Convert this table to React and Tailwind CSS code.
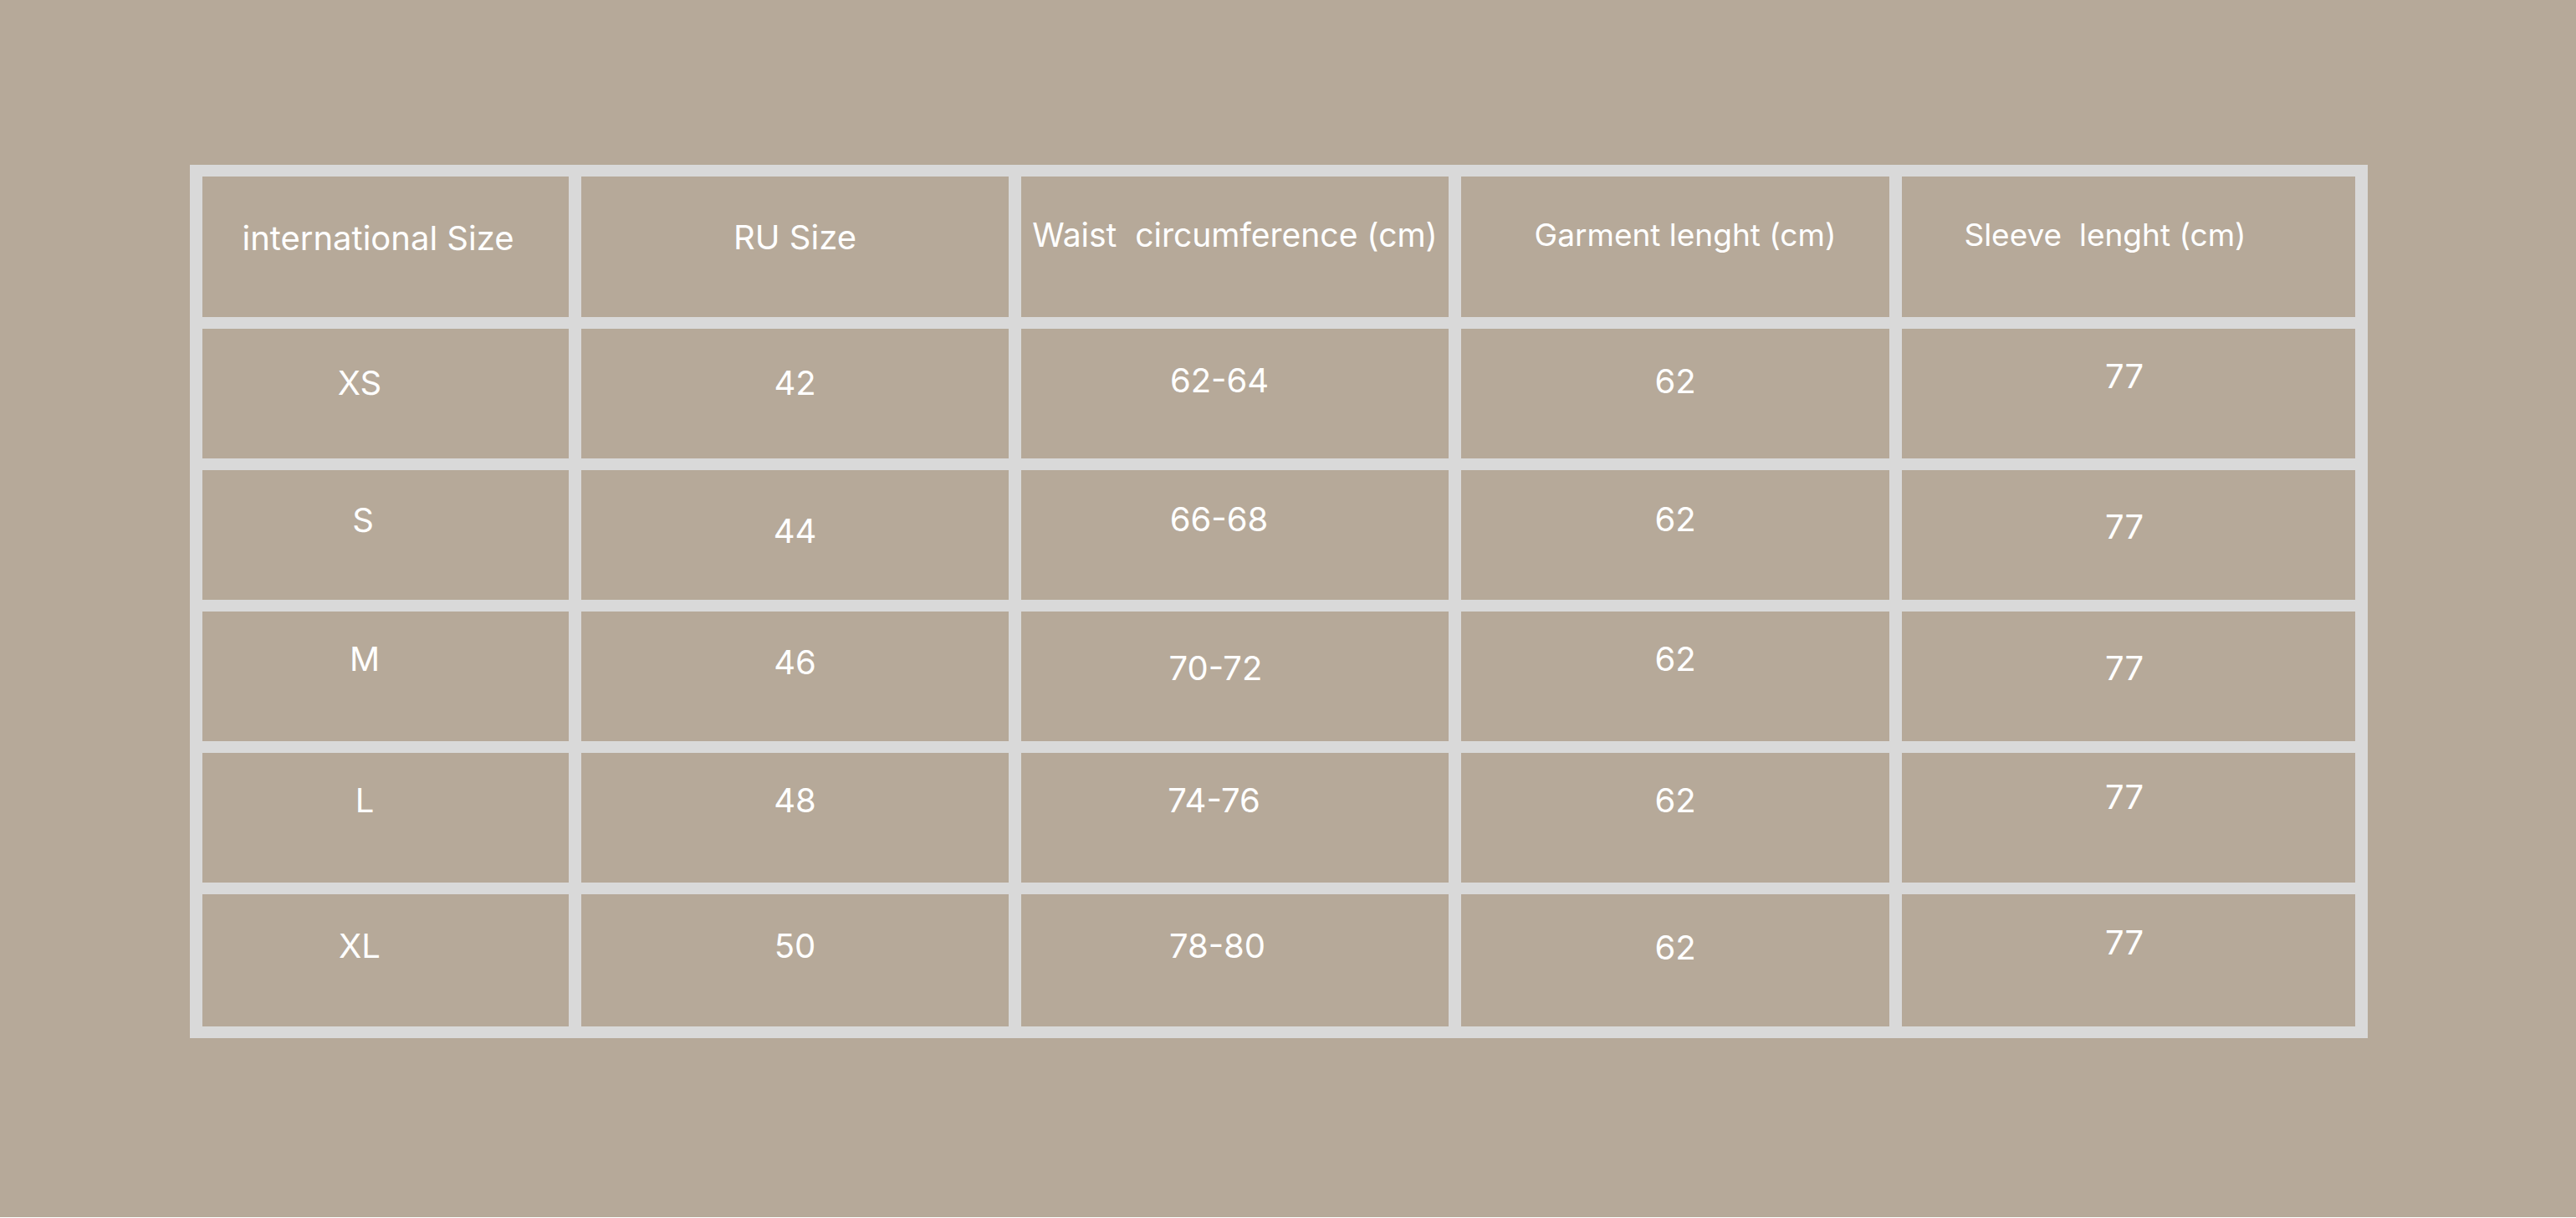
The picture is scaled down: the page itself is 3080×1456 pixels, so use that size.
import React from "react";

const header = [
  { text: "international Size", cls: "pt-[54px] pr-[18px]", size: "text-[40px]" },
  { text: "RU Size", cls: "pt-[53px]", size: "text-[40px]" },
  { text: "Waist  circumference (cm)", cls: "pt-[50px]", size: "text-[39px]" },
  { text: "Garment lenght (cm)", cls: "pt-[51px] pl-[24px]", size: "text-[37px]" },
  { text: "Sleeve  lenght (cm)", cls: "pt-[51px] pr-[56px]", size: "text-[37px]" },
];

// each cell keeps its own nudge, the source layout was placed by hand
const rows = [
  [
    { text: "XS", cls: "pt-[45px] pr-[62px]" },
    { text: "42", cls: "pt-[45px]" },
    { text: "62-64", cls: "pt-[42px] pr-[37px]" },
    { text: "62", cls: "pt-[43px]" },
    { text: "77", cls: "pt-[37px] pr-[10px]" },
  ],
  [
    { text: "S", cls: "pt-[40px] pr-[54px]" },
    { text: "44", cls: "pt-[53px]" },
    { text: "66-68", cls: "pt-[39px] pr-[38px]" },
    { text: "62", cls: "pt-[39px]" },
    { text: "77", cls: "pt-[48px] pr-[10px]" },
  ],
  [
    { text: "M", cls: "pt-[37px] pr-[50px]" },
    { text: "46", cls: "pt-[41px]" },
    { text: "70-72", cls: "pt-[48px] pr-[46px]" },
    { text: "62", cls: "pt-[37px]" },
    { text: "77", cls: "pt-[48px] pr-[10px]" },
  ],
  [
    { text: "L", cls: "pt-[37px] pr-[50px]" },
    { text: "48", cls: "pt-[37px]" },
    { text: "74-76", cls: "pt-[37px] pr-[50px]" },
    { text: "62", cls: "pt-[37px]" },
    { text: "77", cls: "pt-[33px] pr-[10px]" },
  ],
  [
    { text: "XL", cls: "pt-[42px] pr-[62px]" },
    { text: "50", cls: "pt-[42px]" },
    { text: "78-80", cls: "pt-[42px] pr-[42px]" },
    { text: "62", cls: "pt-[44px]" },
    { text: "77", cls: "pt-[38px] pr-[10px]" },
  ],
];

const Cell = ({ text, cls, size = "text-[40px]" }) => (
  <div className={`flex justify-center bg-[#b6a999] ${cls}`}>
    <span className={`whitespace-pre leading-none font-normal text-white ${size}`}>
      {text}
    </span>
  </div>
);

export default function App() {
  return (
    <div
      className="h-[1455px] w-full bg-[#b6a999] pt-[197px] pl-[227px]"
      style={{ fontFamily: "Inter, 'Noto Sans', sans-serif" }}
    >
      {/* Size chart */}
      <div className="inline-grid grid-cols-[438px_511px_511px_512px_542px] grid-rows-[168px_155px_155px_155px_155px_158px] gap-x-[15px] gap-y-[14px] bg-[#d9d9d9] px-[15px] py-[14px]">
        {header.map((h) => (
          <Cell key={h.text} text={h.text} cls={h.cls} size={h.size} />
        ))}
        {rows.map((row, ri) =>
          row.map((c, ci) => <Cell key={`${ri}-${ci}`} text={c.text} cls={c.cls} />)
        )}
      </div>
    </div>
  );
}
